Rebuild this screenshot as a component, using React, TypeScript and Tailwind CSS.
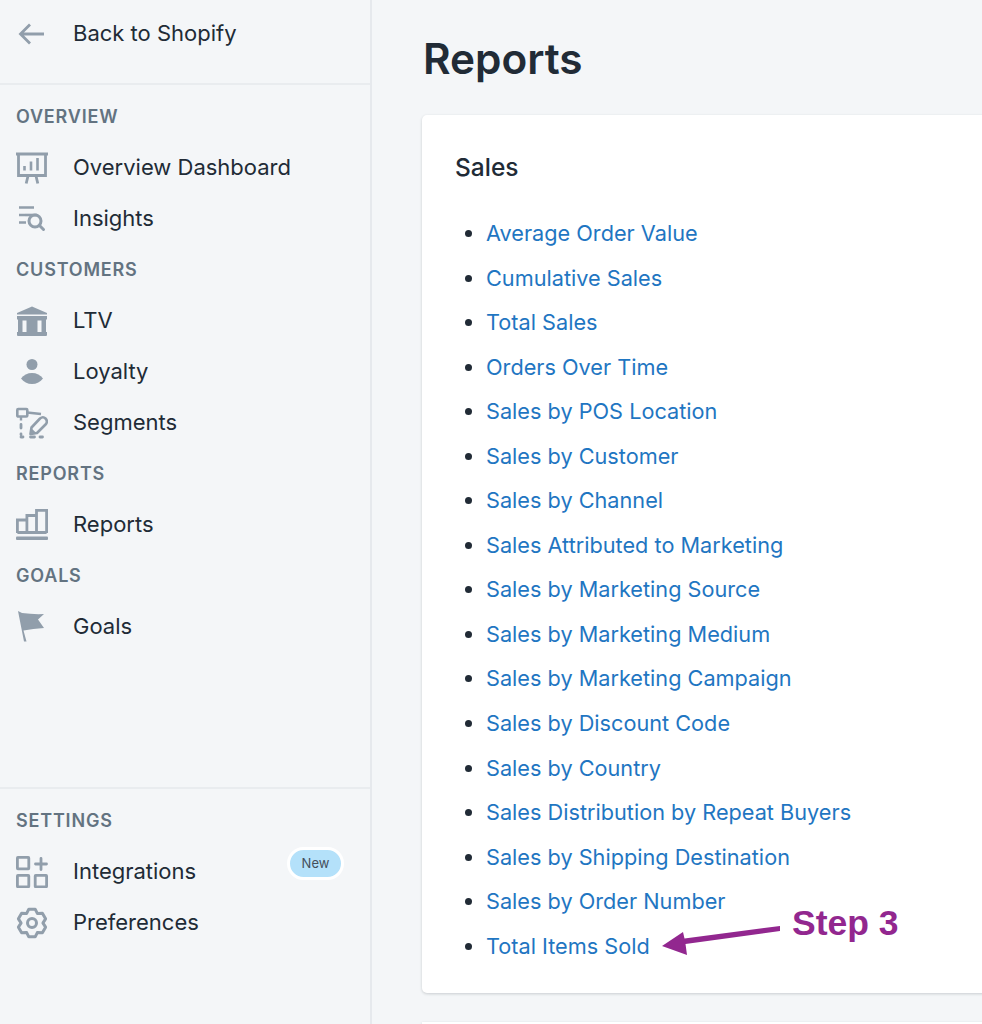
import { ReactNode } from "react"

const salesLinks = [
  "Average Order Value",
  "Cumulative Sales",
  "Total Sales",
  "Orders Over Time",
  "Sales by POS Location",
  "Sales by Customer",
  "Sales by Channel",
  "Sales Attributed to Marketing",
  "Sales by Marketing Source",
  "Sales by Marketing Medium",
  "Sales by Marketing Campaign",
  "Sales by Discount Code",
  "Sales by Country",
  "Sales Distribution by Repeat Buyers",
  "Sales by Shipping Destination",
  "Sales by Order Number",
  "Total Items Sold",
]

const iconColor = "#919eab"

// six toothed outline for the preferences icon
const gearPath =
  [0, 1, 2, 3, 4, 5]
    .map((i) => {
      const a = -90 + i * 60
      const pt = (deg: number, r: number) => {
        const rad = (deg * Math.PI) / 180
        return `${(16 + r * Math.cos(rad)).toFixed(2)} ${(16 + r * Math.sin(rad)).toFixed(2)}`
      }
      return `${i === 0 ? "M" : "L"}${pt(a - 29, 11)} L${pt(a - 13, 14.2)} L${pt(a + 13, 14.2)} L${pt(a + 29, 11)}`
    })
    .join(" ") + "Z"

function Svg({ children }: { children: ReactNode }) {
  return (
    <svg width="32" height="32" viewBox="0 0 32 32" fill="none" className="shrink-0">
      {children}
    </svg>
  )
}

function DashboardIcon() {
  return (
    <Svg>
      <path d="M0 .5h32v3H0z" fill={iconColor} />
      <path d="M2.500 3v20.500h27V3" stroke={iconColor} strokeWidth="2.800" />
      <path d="M8.500 14v4.500M15 9.500v9M21.500 6v12.500" stroke={iconColor} strokeWidth="2.600" />
      <path d="M12 24l-1.800 7.500M20 24l1.800 7.500" stroke={iconColor} strokeWidth="2.800" />
    </Svg>
  )
}

function InsightsIcon() {
  return (
    <Svg>
      <path d="M3 4.500h15M3 12h6M3 19.500h7" stroke={iconColor} strokeWidth="2.600" />
      <path d="M9 12h12" stroke={iconColor} strokeWidth="2.600" />
      <circle cx="19" cy="18" r="6" stroke={iconColor} strokeWidth="3" />
      <path d="M23.500 22.500l4 4" stroke={iconColor} strokeWidth="3" strokeLinecap="round" />
    </Svg>
  )
}

function BankIcon() {
  return (
    <Svg>
      <path d="M16 1.500L31 8v1.500H1V8z" fill={iconColor} />
      <path
        d="M1 11h30v3.500h-1v12.500h1v3q0 1-1 1H2q-1 0-1-1v-3h1V14.500H1zM6.500 15.500V27h4V15.500zM21.500 15.500V27h4V15.500z"
        fill={iconColor}
        fillRule="evenodd"
      />
    </Svg>
  )
}

function PersonIcon() {
  return (
    <Svg>
      <circle cx="16" cy="8.500" r="5.500" fill={iconColor} />
      <path d="M5 22.500c2.500-3.500 6.500-5.500 11-5.500s8.500 2 11 5.500c-2.500 3.500-6.500 5.500-11 5.500s-8.500-2-11-5.500z" fill={iconColor} />
    </Svg>
  )
}

function SegmentsIcon() {
  return (
    <Svg>
      <rect x="1.300" y="2" width="10" height="7.500" rx="1" stroke={iconColor} strokeWidth="2.600" />
      <path d="M11 5.500l14 1.500M5 10v3.500" stroke={iconColor} strokeWidth="2.400" />
      <path d="M14.500 27l1-6.500 8.500-9q3-2.500 5.500 0t.5 5.500l-9 9z" stroke={iconColor} strokeWidth="2.600" strokeLinejoin="round" />
      <path d="M14 28l1-7 6 5.500z" fill={iconColor} />
      <path d="M5 17.500v3.500M5 27v.5M5 30h2M14.500 30h4M24 30h2.500" stroke={iconColor} strokeWidth="2.800" strokeLinecap="round" />
    </Svg>
  )
}

function BarsIcon() {
  return (
    <Svg>
      <path d="M1.400 24V11h9.500V24M10.900 24V6.500h9.600V24M20.500 24V1.400h10.100V24M1.400 23.500h29.200" stroke={iconColor} strokeWidth="2.800" />
      <rect x="0" y="27.500" width="32" height="3.500" rx="1" fill={iconColor} />
    </Svg>
  )
}

function FlagIcon() {
  return (
    <Svg>
      <path d="M2 0l4 2q11 1.500 22 1l-6 5.500 6 8.500q-11 .5-20.500 2.500l3 11H8z" fill={iconColor} />
    </Svg>
  )
}

function IntegrationsIcon() {
  return (
    <Svg>
      <rect x="1.400" y="1.400" width="11.400" height="11.400" rx=".5" stroke={iconColor} strokeWidth="2.800" />
      <rect x="1.400" y="19.400" width="11.400" height="11.400" rx=".5" stroke={iconColor} strokeWidth="2.800" />
      <rect x="19.200" y="19.400" width="11.400" height="11.400" rx=".5" stroke={iconColor} strokeWidth="2.800" />
      <path d="M25 2.500v11M19.500 8h11" stroke={iconColor} strokeWidth="2.800" strokeLinecap="round" />
    </Svg>
  )
}

function GearIcon() {
  return (
    <Svg>
      <path d={gearPath} stroke={iconColor} strokeWidth="3" strokeLinejoin="round" />
      <circle cx="16" cy="16" r="4.500" stroke={iconColor} strokeWidth="3" />
    </Svg>
  )
}

function SectionLabel({ children }: { children: ReactNode }) {
  return (
    <div className="flex h-[51px] items-center pl-4 text-[18px] font-semibold tracking-[0.045em] text-[#637381]">
      {children}
    </div>
  )
}

function NavRow({ icon, label, badge }: { icon: ReactNode; label: string; badge?: boolean }) {
  return (
    <div className="relative flex h-[51px] items-center gap-[25px] pl-4 text-[22px] text-[#212b36]">
      {icon}
      <span>{label}</span>
      {badge && (
        <span className="absolute left-[287px] top-[1px] flex h-[33px] w-[57px] items-center justify-center rounded-full border-[3px] border-white bg-[#b4e1fa] text-[13px] text-[#454f5b]">
          New
        </span>
      )}
    </div>
  )
}

export default function App() {
  return (
    <div className="flex h-[1024px] w-[982px] overflow-hidden bg-[#f4f6f8] font-['Inter',sans-serif]">
      <aside className="flex h-full w-[372px] shrink-0 flex-col border-r-2 border-[#e6e9ed]">
        <div className="flex h-[85px] items-start border-b-2 border-[#e9ecef] pt-[8px]">
          <div className="flex h-[51px] items-center gap-[25px] pl-4 text-[22px] text-[#212b36]">
            <svg width="32" height="32" viewBox="0 0 32 32" fill="none" className="shrink-0">
              <path d="M28 16H5M14 6.500L4.500 16l9.500 9.500" stroke={iconColor} strokeWidth="2.800" />
            </svg>
            <span>Back to Shopify</span>
          </div>
        </div>

        <nav className="flex flex-1 flex-col pt-[6px]">
          <SectionLabel>OVERVIEW</SectionLabel>
          <NavRow icon={<DashboardIcon />} label="Overview Dashboard" />
          <NavRow icon={<InsightsIcon />} label="Insights" />
          <SectionLabel>CUSTOMERS</SectionLabel>
          <NavRow icon={<BankIcon />} label="LTV" />
          <NavRow icon={<PersonIcon />} label="Loyalty" />
          <NavRow icon={<SegmentsIcon />} label="Segments" />
          <SectionLabel>REPORTS</SectionLabel>
          <NavRow icon={<BarsIcon />} label="Reports" />
          <SectionLabel>GOALS</SectionLabel>
          <NavRow icon={<FlagIcon />} label="Goals" />
        </nav>

        <div className="h-[237px] border-t-2 border-[#e9ecef] pt-[6px]">
          <SectionLabel>SETTINGS</SectionLabel>
          <NavRow icon={<IntegrationsIcon />} label="Integrations" badge />
          <NavRow icon={<GearIcon />} label="Preferences" />
        </div>
      </aside>

      <main className="min-w-0 flex-1 pl-[50px]">
        <h1 className="flex h-[115px] items-center pl-[1px] pt-[3px] text-[42.300px] font-semibold text-[#212b36]">Reports</h1>

        <section className="relative h-[878px] w-[620px] rounded-l-[5px] bg-white pl-[33px] pt-[36px] shadow-[0_1px_3px_rgba(33,43,54,0.2)]">
          <h2 className="text-[24.500px] leading-[32px] font-medium text-[#212b36]">Sales</h2>
          <ul className="mt-[28px] list-disc pl-[31px] text-[21.700px] text-[#212b36]">
            {salesLinks.map((link) => (
              <li key={link} className="h-[44.560px] leading-[44px]">
                <a className="text-[#1f76c2]">{link}</a>
              </li>
            ))}
          </ul>

          {/* annotation drawn over the list */}
          <svg width="130" height="40" viewBox="0 0 130 40" fill="none" className="absolute left-[238px] top-[805px]">
            <path d="M120 6L24.500 18.500 23 12 2 26l25 9-1.500-11L120 11z" fill="#92278f" />
          </svg>
          <span className="absolute left-[370px] top-[782px] font-['Liberation_Sans',sans-serif] text-[35.500px] font-bold text-[#92278f]">
            Step 3
          </span>
        </section>

        <div className="mt-[29px] h-[4px] w-[620px] bg-white shadow-[0_1px_3px_rgba(33,43,54,0.2)]" />
      </main>
    </div>
  )
}
